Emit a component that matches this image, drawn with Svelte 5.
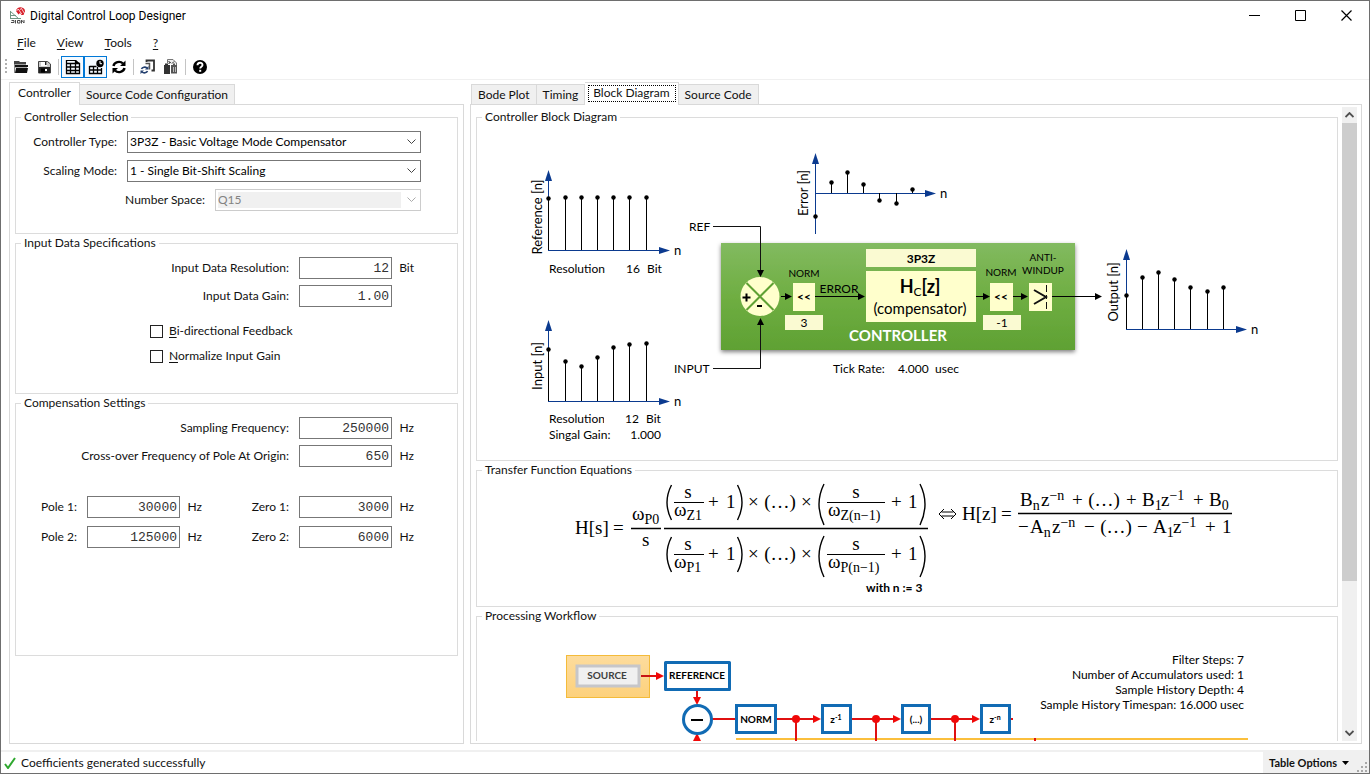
<script>
  const menus = [
    { key: 'F', rest: 'ile' },
    { key: 'V', rest: 'iew' },
    { key: 'T', rest: 'ools' },
    { key: '?', rest: '' }
  ];

  const leftTabs = ['Controller', 'Source Code Configuration'];
  const rightTabs = ['Bode Plot', 'Timing', 'Block Diagram', 'Source Code'];
  let leftTab = $state('Controller');
  let rightTab = $state('Block Diagram');

  const filters = [
    [
      { id: 'pole1', label: 'Pole 1:', value: '30000' },
      { id: 'zero1', label: 'Zero 1:', value: '3000' }
    ],
    [
      { id: 'pole2', label: 'Pole 2:', value: '125000' },
      { id: 'zero2', label: 'Zero 2:', value: '6000' }
    ]
  ];

  // Stem plots: axis origin, arrow tips and one [x, y] pair for each sample.
  const plots = [
    {
      name: 'Reference [n]', x: 549, y: 251, top: 170, bottom: 251, right: 670, lx: 542, ly: 217,
      pts: [[549, 199], [566, 198], [582, 198], [598, 198], [614, 198], [630, 198], [647, 198]]
    },
    {
      name: 'Input [n]', x: 549, y: 402, top: 320, bottom: 402, right: 670, lx: 542, ly: 366,
      pts: [[549, 350], [566, 362], [582, 367], [598, 358], [614, 348], [630, 345], [647, 344]]
    },
    {
      name: 'Error [n]', x: 816, y: 194, top: 153, bottom: 234, right: 936, lx: 808, ly: 193,
      pts: [[816, 217], [832, 183], [848, 173], [864, 185], [880, 201], [897, 204], [913, 190]]
    },
    {
      name: 'Output [n]', x: 1127, y: 330, top: 249, bottom: 330, right: 1247, lx: 1118, ly: 292,
      pts: [[1127, 296], [1143, 278], [1159, 273], [1175, 280], [1191, 288], [1208, 292], [1224, 288]]
    }
  ];

  const factors = [
    { y: 0, sub: 'Z' },
    { y: 52, sub: 'P' }
  ];

  const stages = [
    { x: 796, box: 821, w: 31 },
    { x: 876, box: 901, w: 30 },
    { x: 955, box: 980, w: 31 }
  ];
</script>

<div class="window">
  <header class="titlebar">
    <svg class="logo" width="17" height="17" viewBox="0 0 17 17">
      <path d="M7 4a4.500 4 0 0 1 9 0.500L14.500 8h-2L11 6 9.500 7.500z" fill="#d8202b" />
      <path d="M7.500 4l1.800-2 3.400 5M11 2.500l1.500-1 3 5" stroke="#fff" stroke-width="0.800" fill="none" />
      <path d="M1.500 4v8M1 4l9 8M1 8.500h6M1 11.500h11" stroke="#6f9683" fill="none" />
      <path d="M2 15.500h3v-2H2.500M6.500 13v3.500M8.500 13.500h2.500v2.500H8.500zM12.500 16.500V13l2.500 3v-3" stroke="#4c4c4c" fill="none" />
    </svg>
    <h1>Digital Control Loop Designer</h1>
    <div class="winbtns">
      <button aria-label="Minimize"><svg width="11" height="11"><path d="M0 5.500h11" stroke="#000" /></svg></button>
      <button aria-label="Maximize"><svg width="11" height="11"><path d="M.5 .5h10v10h-10z" stroke="#000" fill="none" /></svg></button>
      <button aria-label="Close"><svg width="11" height="11"><path d="M.5 .5l10 10M10.500 .5l-10 10" stroke="#000" stroke-width="1.200" /></svg></button>
    </div>
  </header>

  <nav class="menubar">
    {#each menus as m}
      <button><u>{m.key}</u>{m.rest}</button>
    {/each}
  </nav>

  <div class="toolbar">
    <span class="grip"></span>
    <button aria-label="Open">
      <svg width="16" height="16" viewBox="0 0 16 16"><path d="M1 2h5l1 1h6v2.500H1z" fill="#444" /><path d="M1 5h1v9H1z" fill="#888" /><path d="M2 6h13v2H2z" fill="#111" /><path d="M3 9h12l-1 5H2z" fill="#111" /><path d="M2 8.500h12" stroke="#aaa" /></svg>
    </button>
    <button aria-label="Save">
      <svg width="16" height="16" viewBox="0 0 16 16"><path d="M2.500 2.500h9l3 2.500v9h-12z" fill="#ccc" stroke="#444" /><path d="M5 3h6v4H5z" fill="#fff" /><path d="M9 3h1.500v3H9z" fill="#222" /><path d="M3 8h11v6H3z" fill="#222" /><path d="M5 9.500h4v4H5z" fill="#000" /><path d="M9 10h2v2H9z" fill="#fff" /></svg>
    </button>
    <span class="sep"></span>
    <button class="on" aria-label="Coefficient table" aria-pressed="true">
      <svg width="16" height="16" viewBox="0 0 16 16"><path d="M1 1h10v1H1zM11 1l4 3.500h-4z" fill="#000" /><path d="M1.500 1v13.500h13V4M1 4.500h14M1 8h14M1 11.500h14M5.500 4v10M10.500 1v13" stroke="#000" stroke-width="1.300" fill="none" /></svg>
    </button>
    <button class="on" aria-label="Timing table" aria-pressed="true">
      <svg width="16" height="16" viewBox="0 0 16 16"><path d="M1.500 7.500h7M1.500 7v7.500h12V9M1 11h13M5.500 7v8M9.500 8v7" stroke="#000" stroke-width="1.300" fill="none" /><circle cx="12" cy="4.500" r="3.700" fill="#000" /><path d="M12 2v2.700h2" stroke="#fff" fill="none" /></svg>
    </button>
    <button aria-label="Refresh">
      <svg width="16" height="16" viewBox="0 0 16 16"><path d="M2.500 7a5.500 4.800 0 0 1 9.500-2.500M13.500 9a5.500 4.800 0 0 1-9.500 2.500" stroke="#000" stroke-width="2.400" fill="none" /><path d="M14.500 1.500V7H9zM1.500 14.500V9H7z" fill="#000" /></svg>
    </button>
    <span class="sep"></span>
    <button aria-label="Export">
      <svg width="16" height="16" viewBox="0 0 16 16"><path d="M6.500 3V1.500h7.500v10h-2.500" stroke="#333" stroke-width="1.800" fill="none" /><path d="M5.500 4.500h4v6" stroke="#555" stroke-width="1.500" fill="none" /><path d="M1.500 10a3.300 2.800 0 0 1 5.500-1M7.500 12a3.300 2.800 0 0 1-5.500 1" stroke="#24406f" stroke-width="1.600" fill="none" /><path d="M8.500 7v3.500H5zM.5 15v-3.500H4z" fill="#24406f" /></svg>
    </button>
    <button aria-label="Copy code">
      <svg width="16" height="16" viewBox="0 0 16 16"><path d="M4.500 4V.5h5.500l3.500 3.500v3" fill="#eee" stroke="#777" /><path d="M5.500 2.500l2 1-2 1M11 2.500l-2 2" stroke="#222" fill="none" /><path d="M1 6h1V4.500h3V6h2v9H1z" fill="#333" /><path d="M8 6h2V4.500h2V6h2v8.500H8z" fill="#555" /><path d="M10.500 8v5M12.500 8v5" stroke="#bbb" /></svg>
    </button>
    <span class="sep"></span>
    <button aria-label="Help">
      <svg width="16" height="16" viewBox="0 0 16 16"><circle cx="8" cy="8" r="7" fill="#000" /><path d="M5.500 6.300c0-3.300 5-3.300 5-.3 0 1.800-2.300 1.600-2.300 3.500" stroke="#fff" stroke-width="1.900" fill="none" /><path d="M7.200 10.800h2v2h-2z" fill="#fff" /></svg>
    </button>
  </div>

  <main>
    <section class="left">
      <div class="tabs" role="tablist">
        {#each leftTabs as t}
          <button role="tab" aria-selected={leftTab === t} class:sel={leftTab === t} onclick={() => (leftTab = t)}>{t}</button>
        {/each}
      </div>
      <div class="page">
        <fieldset class="selection">
          <legend>Controller Selection</legend>
          <div class="row">
            <label for="ctype">Controller Type:</label>
            <div class="combo">
              <select id="ctype"><option>3P3Z - Basic Voltage Mode Compensator</option></select>
              <svg width="9" height="6"><path d="M.5 .5l4 4 4-4" stroke="#444" fill="none" /></svg>
            </div>
          </div>
          <div class="row">
            <label for="smode">Scaling Mode:</label>
            <div class="combo">
              <select id="smode"><option>1 - Single Bit-Shift Scaling</option></select>
              <svg width="9" height="6"><path d="M.5 .5l4 4 4-4" stroke="#444" fill="none" /></svg>
            </div>
          </div>
          <div class="row narrow">
            <label for="nspace">Number Space:</label>
            <div class="combo off">
              <select id="nspace" disabled><option>Q15</option></select>
              <svg width="9" height="6"><path d="M.5 .5l4 4 4-4" stroke="#aaa" fill="none" /></svg>
            </div>
          </div>
        </fieldset>

        <fieldset class="inputs">
          <legend>Input Data Specifications</legend>
          <div class="grid">
            <label class="wide" for="ires">Input Data Resolution:</label>
            <input id="ires" value="12" /><span>Bit</span>
            <label class="wide" for="igain">Input Data Gain:</label>
            <input id="igain" value="1.00" />
          </div>
          <div class="checks">
            <label><input type="checkbox" /><span><u>B</u>i-directional Feedback</span></label>
            <label><input type="checkbox" /><span><u>N</u>ormalize Input Gain</span></label>
          </div>
        </fieldset>

        <fieldset class="comp">
          <legend>Compensation Settings</legend>
          <div class="grid">
            <label class="wide" for="fs">Sampling Frequency:</label>
            <input id="fs" value="250000" /><span>Hz</span>
            <label class="wide" for="fx">Cross-over Frequency of Pole At Origin:</label>
            <input id="fx" value="650" /><span>Hz</span>
          </div>
          <div class="grid filters">
            {#each filters as row}
              {#each row as f}
                <label for={f.id}>{f.label}</label>
                <input id={f.id} value={f.value} /><span>Hz</span>
              {/each}
            {/each}
          </div>
        </fieldset>
      </div>
    </section>

    <section class="right">
      <div class="tabs" role="tablist">
        {#each rightTabs as t}
          <button role="tab" aria-selected={rightTab === t} class:sel={rightTab === t} class:focus={rightTab === t} onclick={() => (rightTab = t)}>{t}</button>
        {/each}
      </div>
      <div class="page">
        <div class="view">
          <fieldset class="diagram">
            <legend>Controller Block Diagram</legend>
            <svg width="860" height="335" viewBox="477 125 860 335">
              <defs>
                <linearGradient id="green" x1="0" y1="0" x2="0" y2="1">
                  <stop offset="0" stop-color="#82ba60" />
                  <stop offset="0.500" stop-color="#6fae42" />
                  <stop offset="1" stop-color="#5fa133" />
                </linearGradient>
                <filter id="shadow" x="-5%" y="-10%" width="110%" height="125%">
                  <feDropShadow dx="0" dy="2" stdDeviation="2" flood-color="#000" flood-opacity="0.500" />
                </filter>
                <clipPath id="cut"><rect x="545" y="410" width="59" height="18" /></clipPath>
              </defs>

              {#each plots as p}
                <path d="M{p.x - 0.5} {p.bottom}V{p.top + 6}M{p.x - 0.5} {p.y - 0.5}H{p.right - 6}" stroke="#0b3a8f" fill="none" />
                <path d="M{p.x - 4} {p.top + 11}L{p.x - 0.5} {p.top}L{p.x + 3} {p.top + 11}z" fill="#0b3a8f" />
                <path d="M{p.right - 11} {p.y - 4}L{p.right} {p.y - 0.5}L{p.right - 11} {p.y + 3}z" fill="#0b3a8f" />
                {#each p.pts as pt, i}
                  {#if i > 0 || p.name !== 'Error [n]'}
                    <path d="M{pt[0] - 0.5} {pt[1]}V{p.y - 1}" stroke="#000" />
                  {/if}
                  <circle cx={pt[0] - 0.5} cy={pt[1] - 0.5} r="2.200" fill="#000" />
                {/each}
                <text class="t13 mid" transform="translate({p.lx} {p.ly}) rotate(-90)">{p.name}</text>
                <text class="t13" x={p.right + 4} y={p.y + 4}>n</text>
              {/each}

              <text class="t12" x="549" y="273">Resolution</text>
              <text class="t12" x="626" y="273">16</text>
              <text class="t12" x="647" y="273">Bit</text>
              <text class="t12" x="549" y="423" clip-path="url(#cut)">Resolution</text>
              <text class="t12" x="625" y="423">12</text>
              <text class="t12" x="646" y="423">Bit</text>
              <text class="t12" x="549" y="439">Singal Gain:</text>
              <text class="t12 end" x="661" y="439">1.000</text>

              <rect x="721" y="243" width="354" height="107" fill="url(#green)" filter="url(#shadow)" />
              <path d="M713 226.500h47.500V271M713 368.500h47.500V324" stroke="#111" fill="none" />
              <path d="M757 270h7l-3.500 7zM757 325h7l-3.500-7z" fill="#000" />
              <text class="t12" x="689" y="231">REF</text>
              <text class="t12" x="674" y="373">INPUT</text>

              <circle cx="760" cy="296.500" r="19.500" fill="#ffffcc" />
              <path d="M746.500 283l27 27M773.500 283l-27 27" stroke="#5fa133" stroke-width="2" />
              <path d="M742.500 297.500h8M746.500 293.500v8M757 306h5" stroke="#000" stroke-width="2" />

              <path d="M781 296.500h7M815 296.500h45M976 296.500h8M1013 296.500h10M1052 296.500h44" stroke="#000" />
              <path d="M785 293v7l7-3.500zM858 293v7l7-3.500zM983 293v7l7-3.500zM1021 293v7l7-3.500zM1095 293v7l7-3.500z" fill="#000" />

              <rect x="793" y="283" width="22" height="28" fill="#ffffcc" />
              <rect x="785" y="315" width="38" height="15" fill="#fafad2" />
              <rect x="866" y="249" width="110" height="18" fill="#fafad2" />
              <rect x="866" y="271" width="110" height="51" fill="#ffffcc" />
              <rect x="990" y="283" width="23" height="28" fill="#ffffcc" />
              <rect x="983" y="315" width="38" height="15" fill="#fafad2" />
              <rect x="1029" y="283" width="23" height="28" fill="#ffffcc" />
              <path d="M1034 290l12 7-12 7" stroke="#111" stroke-width="2" fill="none" />
              <path d="M1046.500 285v7M1046.500 295v4M1046.500 302v7" stroke="#111" />

              <text class="t10 mid" x="804" y="277">NORM</text>
              <text class="t10 mid" x="1001" y="276">NORM</text>
              <text class="t10 mid" x="1043" y="261">ANTI-</text>
              <text class="t10 mid" x="1043" y="274">WINDUP</text>
              <text class="t12 b mid" x="804" y="301">&lt;&lt;</text>
              <text class="t12 b mid" x="1001" y="301">&lt;&lt;</text>
              <text class="t12 mid" x="804" y="327">3</text>
              <text class="t12 mid" x="1002" y="327">-1</text>
              <text class="t12 mid" x="839" y="293">ERROR</text>
              <text class="t12 b mid" x="921" y="263">3P3Z</text>
              <text class="t18 b mid" x="920" y="293">H<tspan class="sub" dy="3">C</tspan><tspan dy="-3">[z]</tspan></text>
              <text class="t15 mid" x="920" y="314">(compensator)</text>
              <text class="t15 b mid" x="898" y="341" fill="#fff">CONTROLLER</text>
              <text class="t12" x="833" y="373">Tick Rate:</text>
              <text class="t12" x="898" y="373">4.000</text>
              <text class="t12" x="935" y="373">usec</text>
            </svg>
          </fieldset>

          <fieldset class="equations">
            <legend>Transfer Function Equations</legend>
            <svg class="math" width="860" height="127" viewBox="477 478 860 127">
              <text x="575" y="534">H[s]</text>
              <text x="613" y="534">=</text>
              <text x="632" y="520">ω<tspan class="s" dy="4">P0</tspan></text>
              <text x="642" y="546">s</text>
              <path d="M631 528.500h30M664 528.500h264" stroke="#000" stroke-width="1.300" />

              {#each factors as f}
                <g transform="translate(0 {f.y})">
                  <path d="M671.500 485q-9 17.500 0 35M737.500 485q9 17.500 0 35M824 484q-10 20 0 41M920 484q10 20 0 41" stroke="#000" stroke-width="1.400" fill="none" />
                  <path d="M674 502.500h30M827 502.500h58" stroke="#000" />
                  <text class="mid" x="688" y="498">s</text>
                  <text x="674" y="516">ω<tspan class="s" dy="4">{f.sub}1</tspan></text>
                  <text x="708" y="508">+</text>
                  <text x="726" y="508">1</text>
                  <text x="748" y="508">×</text>
                  <text class="mid" x="780" y="508">(…)</text>
                  <text x="801" y="508">×</text>
                  <text class="mid" x="856" y="498">s</text>
                  <text x="828" y="516">ω<tspan class="s" dy="4">{f.sub}(n−1)</tspan></text>
                  <text x="891" y="508">+</text>
                  <text x="908" y="508">1</text>
                </g>
              {/each}
              <text class="note" x="866" y="592">with n := 3</text>

              <path d="M944 509l-5 5 5 5M951 509l5 5-5 5M941.500 512h12M941.500 516h12" stroke="#000" fill="none" />
              <text x="962" y="520">H[z]</text>
              <text x="1001" y="520">=</text>
              <path d="M1018 513.500h214" stroke="#000" stroke-width="1.300" />
              <text x="1020" y="506">B<tspan class="s" dy="4">n</tspan></text>
              <text x="1041" y="506">z<tspan class="s" dy="-6">−n</tspan></text>
              <text x="1072" y="506">+</text>
              <text class="mid" x="1104" y="506">(…)</text>
              <text x="1126" y="506">+</text>
              <text x="1142" y="506">B<tspan class="s" dy="4">1</tspan></text>
              <text x="1161" y="506">z<tspan class="s" dy="-6">−1</tspan></text>
              <text x="1193" y="506">+</text>
              <text x="1209" y="506">B<tspan class="s" dy="4">0</tspan></text>
              <text x="1018" y="533">−</text>
              <text x="1030" y="533">A<tspan class="s" dy="4">n</tspan></text>
              <text x="1052" y="533">z<tspan class="s" dy="-6">−n</tspan></text>
              <text x="1084" y="533">−</text>
              <text class="mid" x="1116" y="533">(…)</text>
              <text x="1137" y="533">−</text>
              <text x="1153" y="533">A<tspan class="s" dy="4">1</tspan></text>
              <text x="1173" y="533">z<tspan class="s" dy="-6">−1</tspan></text>
              <text x="1205" y="533">+</text>
              <text x="1222" y="533">1</text>
            </svg>
          </fieldset>

          <fieldset class="workflow">
            <legend>Processing Workflow</legend>
            <svg width="860" height="140" viewBox="477 624 860 140">
              <defs>
                <linearGradient id="amber" x1="0" y1="0" x2="0" y2="1">
                  <stop offset="0" stop-color="#fddc9d" />
                  <stop offset="1" stop-color="#fdd17c" />
                </linearGradient>
              </defs>
              <rect x="566.500" y="655.500" width="83" height="42" fill="url(#amber)" stroke="#f4bb3a" />
              <rect x="577" y="666" width="62" height="20" fill="#f0f0f0" stroke="#c6c6c9" stroke-width="3" />
              <text class="t10 b mid" x="607" y="679" fill="#404040">SOURCE</text>
              <path d="M641 676h16" stroke="#c81414" stroke-width="2" />
              <path d="M736 739h512" stroke="#fbbf3c" stroke-width="2" />
              <g stroke="#e01010" stroke-width="2">
                <path d="M650 676h8M697 691v8M712 719h24M777 719h38M852 719h42M931 719h42M1011 719h2M796 719v45M876 719v45M955 719v45M1035 738v3" />
              </g>
              <g fill="#f00808">
                <path d="M656 672v8l8-4zM693 697h8l-4 8zM693 741h8l-4-8zM813 715v8l8-4zM893 715v8l8-4zM972 715v8l8-4z" />
                {#each stages as s}<circle cx={s.x} cy="719" r="4" />{/each}
              </g>
              <g fill="#fff" stroke="#116bb4" stroke-width="3">
                <rect x="665.500" y="662.500" width="64" height="27" stroke-linejoin="round" />
                <circle cx="697.500" cy="719.500" r="14" />
                <rect x="736.500" y="705.500" width="39" height="27" />
                {#each stages as s}<rect x={s.box + 1.5} y="705.500" width={s.w - 3} height="27" />{/each}
              </g>
              <path d="M691 720h12" stroke="#000" stroke-width="2" />
              <text class="t10 b mid" x="697" y="679">REFERENCE</text>
              <text class="t10 b mid" x="756" y="723">NORM</text>
              <text class="t10 b mid" x="836" y="723">z<tspan class="tiny" dy="-3">-1</tspan></text>
              <text class="t10 b mid" x="916" y="723">(...)</text>
              <text class="t10 b mid" x="995" y="723">z<tspan class="tiny" dy="-3">-n</tspan></text>
              <text class="t12 end" x="1244" y="664">Filter Steps: 7</text>
              <text class="t12 end" x="1244" y="679">Number of Accumulators used: 1</text>
              <text class="t12 end" x="1244" y="694">Sample History Depth: 4</text>
              <text class="t12 end" x="1244" y="709">Sample History Timespan: 16.000 usec</text>
            </svg>
          </fieldset>
        </div>
        <div class="scroll">
          <button aria-label="Scroll up"><svg width="9" height="6"><path d="M.5 5l4-4 4 4" stroke="#505050" stroke-width="1.800" fill="none" /></svg></button>
          <div class="track"><div class="thumb"></div></div>
          <button aria-label="Scroll down"><svg width="9" height="6"><path d="M.5 1l4 4 4-4" stroke="#505050" stroke-width="1.800" fill="none" /></svg></button>
        </div>
      </div>
    </section>
  </main>

  <footer>
    <svg width="12" height="12" viewBox="0 0 12 12"><path d="M1 7l3 4L11 1" stroke="#2fa82f" stroke-width="2" fill="none" /></svg>
    <span class="msg">Coefficients generated successfully</span>
    <div class="options">
      <button>Table Options <svg width="7" height="4"><path d="M0 0h7L3.500 4z" /></svg></button>
      <svg class="size" width="11" height="11"><path d="M8 1h2M4 5h2M8 5h2M0 9h2M4 9h2M8 9h2" stroke="#a8a8a8" stroke-width="2" /></svg>
    </div>
  </footer>
</div>

<style>
  :global(body) { margin: 0; background: #fff; }
  .window {
    box-sizing: border-box;
    display: flex;
    flex-direction: column;
    height: 100vh;
    border: 1px solid #6e6e6e;
    overflow: hidden;
    font: 12px/16px Lato, 'Liberation Sans', sans-serif;
    color: #111;
  }
  button { font: inherit; color: inherit; border: 0; padding: 0; background: none; }
  svg { display: block; flex: none; }
  u { text-underline-offset: 2px; }

  .titlebar { display: flex; align-items: center; height: 29px; padding-left: 8px; }
  h1 { flex: 1; margin: 0 0 0 4px; font: 12px/16px Roboto, sans-serif; color: #000; }
  .winbtns { display: flex; }
  .winbtns button { display: grid; place-items: center; width: 46px; height: 29px; }

  .menubar { display: flex; gap: 21px; height: 25px; padding-left: 16px; align-items: center; }

  .toolbar { display: flex; align-items: center; height: 24px; padding-left: 4px; }
  .toolbar button { box-sizing: border-box; display: grid; place-items: center; width: 23px; height: 22px; }
  .toolbar .on { border: 1px solid #0078d7; background: #f5faff; }
  .grip { width: 2px; height: 16px; margin-right: 2px; background: repeating-linear-gradient(#b0b0b0 0 2px, transparent 2px 4px); }
  .sep { width: 1px; height: 16px; margin: 0 2px 0 3px; background: #c4c4c4; }

  main { display: flex; flex: 1; min-height: 0; padding: 2px 7px 6px 8px; gap: 6px; border-top: 1px solid #f0f0f0; }
  section { display: flex; flex-direction: column; min-width: 0; }
  .left { flex: 0 0 455px; }
  .right { flex: 1; }
  .tabs { display: flex; align-items: flex-end; height: 22px; }
  .right .tabs { padding-left: 1px; }
  .tabs button {
    height: 20px; padding: 0 6px; border: 1px solid #d9d9d9; border-width: 1px 1px 0 0;
    background: #f0f0f0; white-space: nowrap;
  }
  .tabs button:first-child { border-left-width: 1px; }
  .tabs .sel { position: relative; height: 23px; margin-bottom: -1px; padding: 0 8px 2px; background: #fff; }
  .tabs .focus { outline: 1px dotted #000; outline-offset: -4px; }
  .page { flex: 1; min-height: 0; display: flex; border: 1px solid #d9d9d9; }
  .left .page { flex-direction: column; gap: 1px; padding: 4px 5px 0; }

  fieldset { box-sizing: border-box; min-width: 0; margin: 0; padding: 0; border: 1px solid #dcdcdc; }
  legend { margin-left: 5px; padding: 0 3px; line-height: 16px; }

  .selection { height: 125px; padding: 6px 36px 0 0; }
  .inputs { height: 159px; }
  .comp { height: 261px; }
  .row { display: flex; align-items: center; margin-bottom: 7px; }
  .row label { flex: 0 0 101px; margin-right: 10px; text-align: right; }
  .row.narrow label { flex-basis: 189px; }
  .combo { flex: 1; display: flex; align-items: center; box-sizing: border-box; height: 22px; padding: 2px 4px 2px 2px; border: 1px solid #777; }
  .combo select { flex: 1; height: 16px; border: 0; padding: 0; margin-right: 6px; appearance: none; background: none; font: inherit; color: #000; opacity: 1; }
  .off { border-color: #ccc; }
  .off select { color: #838383; background: #f0f0f0; }

  .grid {
    display: grid;
    grid-template-columns: 63px 93px 14px 1fr 93px 14px;
    gap: 6px 8px;
    align-items: center;
    padding: 6px 43px 0 0;
  }
  .grid label { padding-right: 2px; text-align: right; }
  .grid .wide { grid-column: 1 / 5; }
  .grid input {
    box-sizing: border-box; min-width: 0; width: 100%; height: 22px; padding: 0 2px; border: 1px solid #777;
    text-align: right; font: 13px/18px 'Liberation Mono', monospace; color: #333;
  }
  .grid span { justify-self: end; white-space: nowrap; }
  .filters { row-gap: 8px; padding-top: 29px; }
  .checks { display: flex; flex-direction: column; gap: 9px; padding: 16px 0 0 134px; }
  .checks label { display: flex; align-items: center; gap: 6px; }
  .checks input { appearance: none; box-sizing: border-box; width: 13px; height: 13px; margin: 0; border: 1px solid #222; }

  .right .page { padding: 2px 4px 2px 3px; }
  .view { flex: 1; min-width: 0; display: flex; flex-direction: column; gap: 1px; padding: 2px 3px 0 2px; overflow: hidden; }
  .view fieldset { flex: none; overflow: hidden; }
  .diagram { height: 352px; }
  .equations { height: 145px; }
  .workflow { height: 300px; }
  .scroll { flex: 0 0 15px; display: flex; flex-direction: column; margin-left: 1px; background: #f0f0f0; }
  .scroll button { display: grid; place-items: center; height: 16px; }
  .track { flex: 1; }
  .thumb { height: 76%; background: #cdcdcd; }

  text { font-family: Lato, 'Liberation Sans', sans-serif; }
  .t10 { font-size: 10px; }
  .t12 { font-size: 12px; }
  .t13 { font-size: 13px; }
  .t15 { font-size: 15px; }
  .t18 { font-size: 18px; }
  .b { font-weight: 700; }
  .mid { text-anchor: middle; }
  .end { text-anchor: end; }
  .sub { font-size: 12px; font-weight: 400; }
  .tiny { font-size: 7px; }
  .math text { font: 19px 'Liberation Serif', serif; }
  .math .s { font-size: 14px; }
  .math .note { font: 700 12px Lato, sans-serif; }

  footer { display: flex; align-items: center; height: 21px; padding-left: 3px; border-top: 2px solid #f0f0f0; }
  .msg { flex: 1; padding-left: 5px; }
  .options { display: flex; align-items: center; gap: 8px; height: 21px; padding: 0 1px 0 6px; background: #f0f0f0; font-weight: 700; font-size: 11px; }
  .options button { display: flex; align-items: center; gap: 5px; }
  .size { align-self: flex-end; }
</style>
